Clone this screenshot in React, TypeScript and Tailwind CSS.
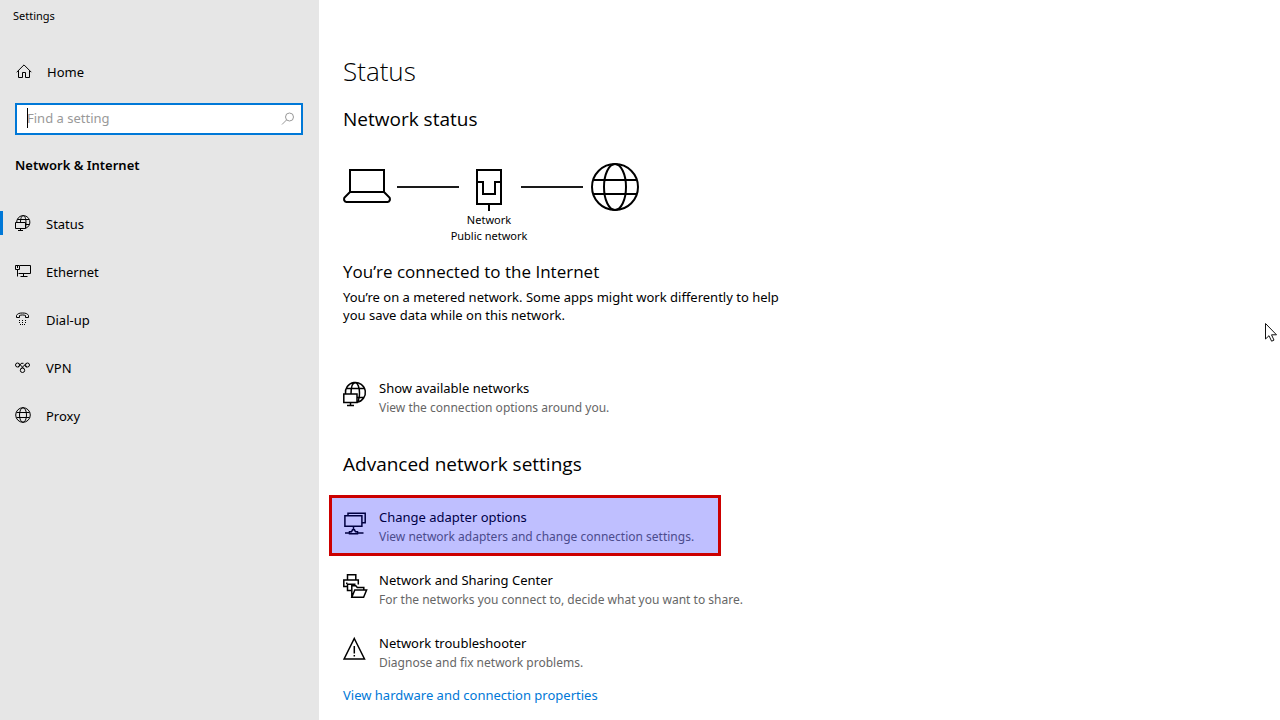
import type { ReactNode } from 'react';

type IconProps = { children: ReactNode };

function SmallIcon({ children }: IconProps) {
  return (
    <svg className="mb-1 h-4 w-4 shrink-0 overflow-visible" viewBox="0 0 16 16" fill="none" stroke="currentColor" aria-hidden="true">
      {children}
    </svg>
  );
}

function LargeIcon({ children }: IconProps) {
  return (
    <svg className="mt-1 h-6 w-6 shrink-0 overflow-visible" viewBox="0 0 24 24" fill="none" stroke="currentColor" strokeWidth={1.5} aria-hidden="true">
      {children}
    </svg>
  );
}

const navItems = [
  {
    label: 'Status',
    active: true,
    icon: (
      <SmallIcon>
        <path d="M1.700 7.500A6.600 6.600 0 1 1 10.500 13.400M5.500 7.500C5.500 3.500 6.500 .7 8.200 .7s2.800 2.800 2.800 6.800c0 2.500-.1 4-.6 5.500M2.500 4.500h11.500M10.500 9.500h3.700" />
        <path d="M.5 7.500h10v6H.5zM5.500 13.500v2M3 15.500h5" />
      </SmallIcon>
    ),
  },
  {
    label: 'Ethernet',
    active: false,
    icon: (
      <SmallIcon>
        <path d="M5 2.500h10.500v8H3.500M.5 2.500h4v4h-4zM2.500 6.500v7M8.500 10.500v3M5.500 13.500h7M2.500 3v2" />
      </SmallIcon>
    ),
  },
  {
    label: 'Dial-up',
    active: false,
    icon: (
      <SmallIcon>
        <path d="M1.500 6.500V4.500C2.500 2.500 4.500 2 7.500 2s5 .5 6 2.500v2h-3v-2c-1.500-.7-4.500-.7-6 0v2z" />
        <path d="M4 9.500h1M7 9.500h1M10 9.500h1M4 11.500h1M7 11.500h1M10 11.500h1M5 13.500h1M7 13.500h1M9 13.500h1" />
      </SmallIcon>
    ),
  },
  {
    label: 'VPN',
    active: false,
    icon: (
      <SmallIcon>
        <circle cx="2.500" cy="6" r="2" />
        <circle cx="12.500" cy="6" r="2" />
        <circle cx="7.500" cy="11.300" r="2.200" />
        <path d="M3 8c2 0 1.800-3.700 3.800-3.700M4 4.500l4.800 5M11 4.500 6 9.700M12 8c-1.800 0-1.800-1-2.500-1.700M6.500 4.300h2" />
      </SmallIcon>
    ),
  },
  {
    label: 'Proxy',
    active: false,
    icon: (
      <SmallIcon>
        <circle cx="8" cy="8" r="7.300" />
        <ellipse cx="8" cy="8" rx="3.500" ry="7.300" />
        <path d="M1.500 5.500h13M1.500 10.500h13" />
      </SmallIcon>
    ),
  },
];

const advancedItems = [
  {
    title: 'Change adapter options',
    detail: 'View network adapters and change connection settings.',
    highlighted: true,
    icon: (
      <LargeIcon>
        <path d="M5 4.800V2.300h17.200v9.500h-3M1.900 4.800h17v10.500h-17zM10.500 15.300v3.500M2 22h4.500M14.500 22H20.500M6.500 22.800v-2h2l1-2h2l1 2h2v2z" />
      </LargeIcon>
    ),
  },
  {
    title: 'Network and Sharing Center',
    detail: 'For the networks you connect to, decide what you want to share.',
    highlighted: false,
    icon: (
      <LargeIcon>
        <path d="M4.500 6V.8h8.300V6M4 12.500H.8V6h14.500v4.500M3 9.300h1.500" />
        <path d="M8 16.500H4.500v-6.300h8M8.800 23.300V11.800h4l1.500 1.700h6.500v2.500M8.800 23.300l3-7.300h11.800l-3 7.300z" />
      </LargeIcon>
    ),
  },
  {
    title: 'Network troubleshooter',
    detail: 'Diagnose and fix network problems.',
    highlighted: false,
    icon: (
      <LargeIcon>
        <path d="M11.300 1.500 21.500 22H1.100zM11.300 9v7.500M11.300 18v1.500" />
      </LargeIcon>
    ),
  },
];

type SettingRowProps = {
  title: string;
  detail: string;
  icon: ReactNode;
  highlighted?: boolean;
};

function SettingRow({ title, detail, icon, highlighted = false }: SettingRowProps) {
  return (
    <button type="button" className="relative flex items-start gap-3 py-3 text-left">
      {icon}
      <span className="flex flex-col">
        <span className="text-[13px] leading-5">{title}</span>
        <span className="text-[12px] leading-[19px] text-[#666666]">{detail}</span>
      </span>
      {highlighted && (
        <span className="absolute top-0 -right-[27px] bottom-[2px] -left-[14px] border-3 border-[#cc0000] bg-[#0000ff]/25" />
      )}
    </button>
  );
}

function Sidebar() {
  return (
    <aside className="w-[319px] shrink-0 bg-[#e6e6e6]">
      <div className="flex h-8 items-center pl-[13px] text-[11px]">Settings</div>
      <button type="button" className="mt-4 flex h-12 w-full items-center gap-[15px] pt-0.5 pl-4 text-[13px]">
        <SmallIcon>
          <path d="M.7 9.200 8 1.900l7.300 7.300M2.500 7.500v7h4v-5h3v5h4v-7" />
        </SmallIcon>
        Home
      </button>
      <div className="relative mt-[7px] mr-4 ml-[15px]">
        <input
          type="text"
          aria-label="Find a setting"
          placeholder="Find a setting"
          className="block h-8 w-full border-2 border-[#0078d7] bg-white pr-8 pb-[2px] pl-[10px] text-[13px] outline-none placeholder:text-[#999999]"
        />
        <span className="absolute top-[5px] left-3 h-5 w-px bg-black" />
        <svg className="absolute top-2 right-[7px] h-4 w-4 text-[#999999]" viewBox="0 0 16 16" fill="none" stroke="currentColor" aria-hidden="true">
          <circle cx="9.500" cy="6" r="4" />
          <path d="M6.700 8.800 2 13.500" />
        </svg>
      </div>
      <h2 className="mt-5 pl-[15px] text-[13px] leading-5 font-semibold">Network &amp; Internet</h2>
      <nav className="mt-[25px]">
        {navItems.map((item) => (
          <a key={item.label} href="#" className="relative flex h-12 items-center gap-[15px] pt-0.5 pl-[15px] text-[13px]">
            {item.active && <span className="absolute top-[11px] left-0 h-6 w-[3px] bg-[#0078d7]" />}
            {item.icon}
            {item.label}
          </a>
        ))}
      </nav>
    </aside>
  );
}

function ConnectionDiagram() {
  return (
    <div className="mt-[30px] flex items-start">
      <svg className="h-12 w-12" viewBox="0 0 48 48" fill="none" stroke="currentColor" strokeWidth={2} aria-hidden="true">
        <path d="M7 29V7h34v22zM7 29l-5.500 5.500c-1 2 0 4.500 2 4.500h41c2 0 3-2.500 2-4.500L41 29" />
      </svg>
      <span className="mx-[6px] mt-[23px] h-[2px] w-[62px] bg-[#1a1a1a]" />
      <div className="flex w-12 flex-col items-center text-[11px] leading-4 whitespace-nowrap">
        <svg className="mb-px h-12 w-12" viewBox="0 0 48 48" fill="none" stroke="currentColor" strokeWidth={2} aria-hidden="true">
          <path d="M12 7h24v34H12zM12 19h6v12h12V19h6M24 41v7" />
        </svg>
        <span>Network</span>
        <span>Public network</span>
      </div>
      <span className="mx-2 mt-[23px] h-[2px] w-[62px] bg-[#1a1a1a]" />
      <svg className="h-12 w-12" viewBox="0 0 48 48" fill="none" stroke="currentColor" strokeWidth={2} aria-hidden="true">
        <circle cx="24" cy="24" r="23" />
        <ellipse cx="24" cy="24" rx="11" ry="23" />
        <path d="M3 17h42M3 31h42" />
      </svg>
    </div>
  );
}

export default function App() {
  return (
    <div className="relative flex min-h-screen overflow-hidden bg-white font-['Noto_Sans','Open_Sans',sans-serif] text-black">
      <Sidebar />
      <main className="flex-1 pt-[51px] pl-6">
        <h1 className="font-['Open_Sans',sans-serif] text-[26px] leading-10 font-light">Status</h1>
        <h2 className="mt-[14px] font-['Open_Sans',sans-serif] text-[19px] leading-7">Network status</h2>
        <ConnectionDiagram />
        <h3 className="mt-4 font-['Open_Sans',sans-serif] text-[17px] leading-6">You’re connected to the Internet</h3>
        <p className="mt-1 mb-[42px] max-w-[450px] text-[13px] leading-[18px]">
          You’re on a metered network. Some apps might work differently to help you save data while on this network.
        </p>
        <SettingRow
          title="Show available networks"
          detail="View the connection options around you."
          icon={
            <LargeIcon>
              <path d="M2.500 12A10 10 0 1 1 14 20.300M8 12C8 5 9.800 .8 12.200 .8s4.300 4.200 4.300 10c0 4-.6 7.200-2 9M3.500 6.500h17.800M14 15.500h7.300" />
              <path d="M.8 12h13.200v8.500H.8zM7.500 20.500v3M4 23.500h7" />
            </LargeIcon>
          }
        />
        <h2 className="mt-[21px] mb-[17px] font-['Open_Sans',sans-serif] text-[19px] leading-7">Advanced network settings</h2>
        {advancedItems.map((item) => (
          <SettingRow key={item.title} {...item} />
        ))}
        <a href="#" className="mt-px block w-fit text-[13px] leading-5 text-[#0078d7]">
          View hardware and connection properties
        </a>
      </main>
      <svg className="absolute top-[322px] right-[2px] h-[21px] w-[14px]" viewBox="0 0 14 21" aria-hidden="true">
        <path d="M1.500 1.500v15.500l3.500-3.300 2.600 5.500 2.400-1.100-2.500-5.300h5z" fill="white" stroke="#111111" />
      </svg>
    </div>
  );
}
